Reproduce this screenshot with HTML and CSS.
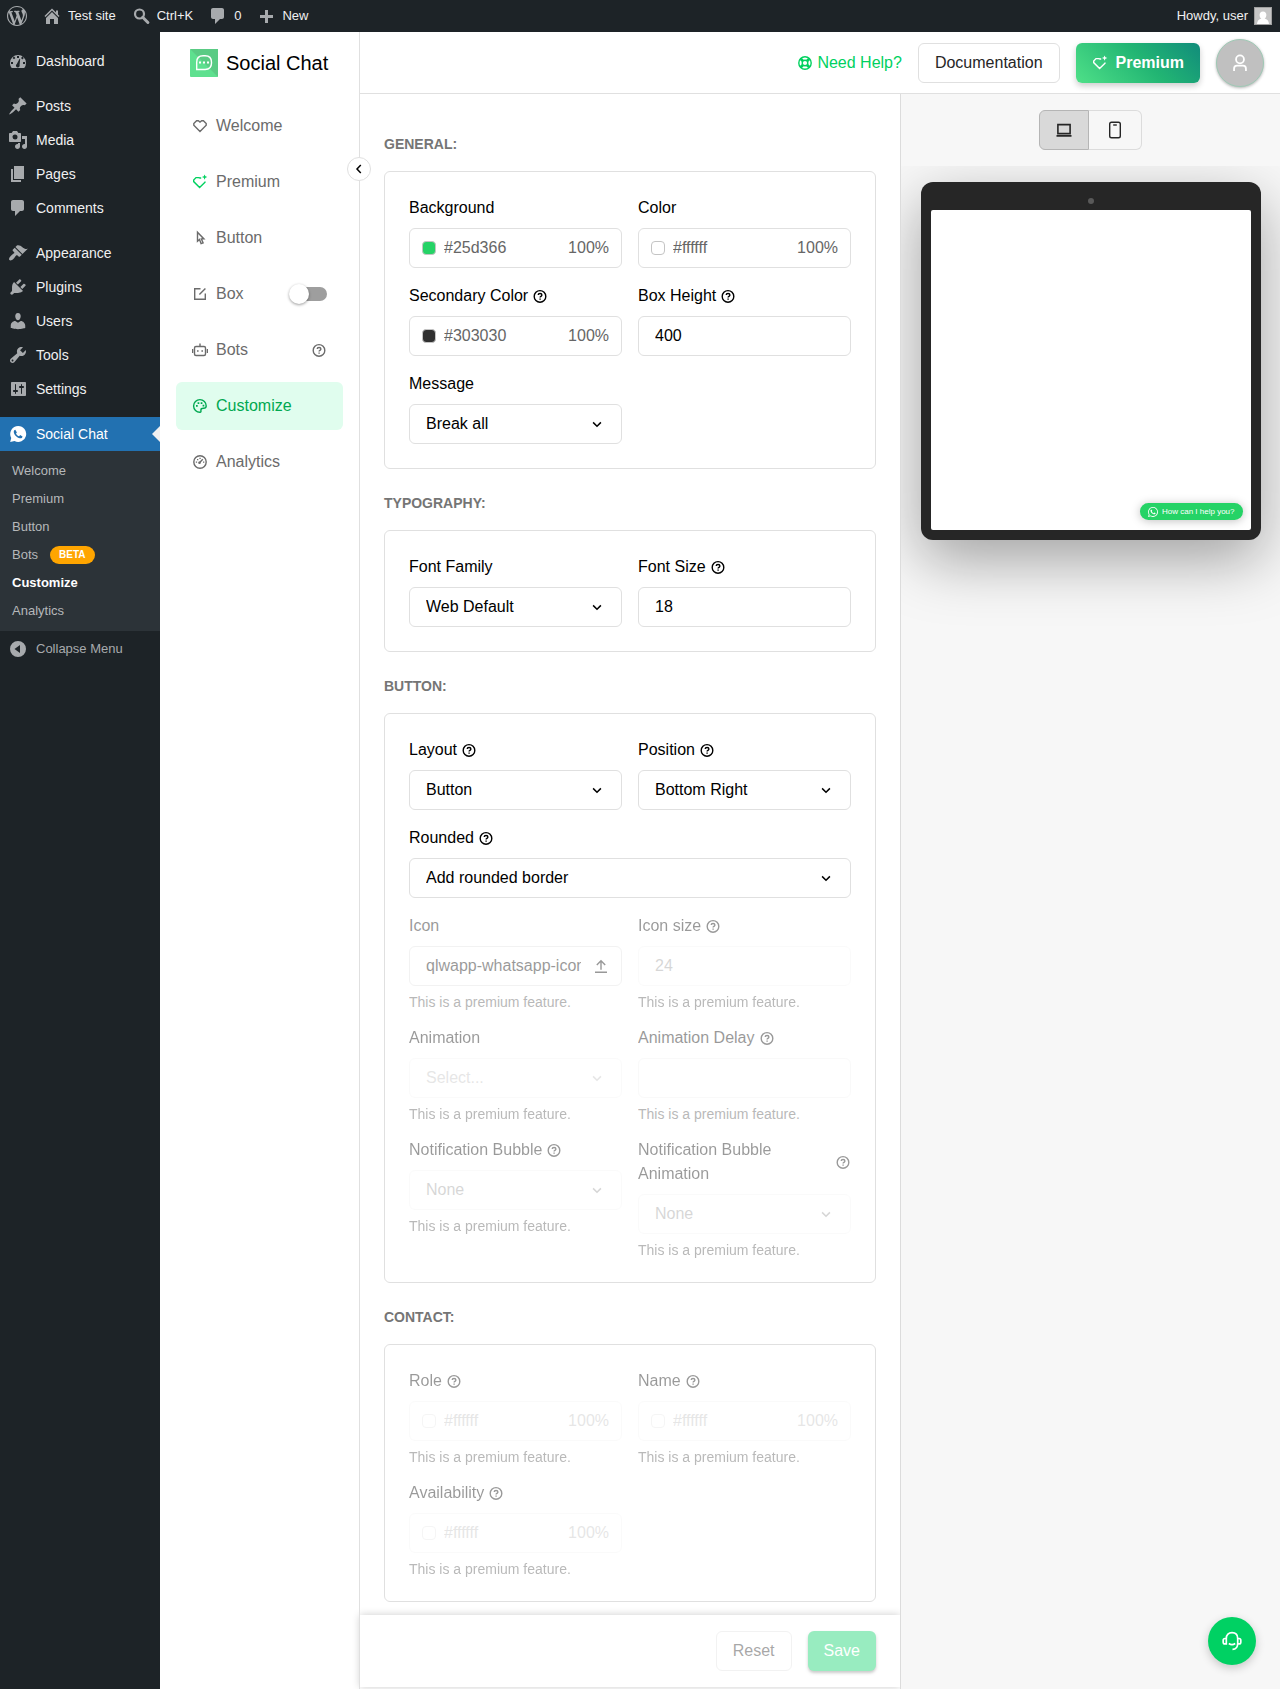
FILE: index.html
```html
<!DOCTYPE html>
<html lang="en">
<head>
    <meta charset="utf-8">
    <title>Customize - Social Chat</title>
    <link rel="stylesheet" href="styles.css">
</head>
<body>
    <!-- Icon sprite -->
    <svg class="sprite" xmlns="http://www.w3.org/2000/svg">
        <symbol id="i-wp" viewBox="0 0 20 20"><path d="M20 10c0-5.51-4.49-10-10-10C4.48 0 0 4.49 0 10c0 5.52 4.48 10 10 10 5.51 0 10-4.48 10-10zM7.78 15.37L4.37 6.22c.55-.02 1.17-.08 1.17-.08.5-.06.44-1.13-.06-1.11 0 0-1.45.11-2.37.11-.18 0-.37 0-.58-.01C4.12 2.69 6.87 1.11 10 1.11c2.33 0 4.45.87 6.05 2.34-.68-.11-1.65.39-1.65 1.58 0 .74.45 1.36.9 2.1.35.61.55 1.36.55 2.46 0 1.49-1.4 5-1.4 5l-3.03-8.37c.54-.02.82-.17.82-.17.5-.05.44-1.25-.06-1.22 0 0-1.44.12-2.38.12-.87 0-2.33-.12-2.33-.12-.5-.03-.56 1.2-.06 1.22l.92.08 1.26 3.41zM17.41 10c.24-.64.74-1.87.43-4.25.7 1.29 1.05 2.71 1.05 4.25 0 3.29-1.73 6.24-4.4 7.78.97-2.59 1.94-5.2 2.92-7.78zM6.1 18.09C3.12 16.65 1.11 13.53 1.11 10c0-1.3.23-2.48.72-3.59C3.25 10.3 4.67 14.2 6.1 18.09zm4.03-6.63l2.58 6.98c-.86.29-1.76.45-2.71.45-.79 0-1.57-.11-2.29-.33.81-2.38 1.62-4.74 2.42-7.1z"/></symbol>
        <symbol id="i-home" viewBox="0 0 20 20"><path d="M16 8.5l1.53 1.53-1.06 1.06L10 4.6l-6.47 6.49-1.06-1.06L10 2.5l4 4v-2h2v4zm-6-2.46l6 5.99V18h-4v-5H8v5H4v-5.97z"/></symbol>
        <symbol id="i-search" viewBox="0 0 20 20"><circle cx="8.5" cy="8" r="4.5" fill="none" stroke="currentColor" stroke-width="2.2"/><path d="M11.7 11.3l5.2 5.2" stroke="currentColor" stroke-width="3" stroke-linecap="round"/></symbol>
        <symbol id="i-comment" viewBox="0 0 20 20"><path d="M5 2h9c1.1 0 2 .9 2 2v7c0 1.1-.9 2-2 2h-2l-5 5v-5H5c-1.1 0-2-.9-2-2V4c0-1.1.9-2 2-2z"/></symbol>
        <symbol id="i-plus" viewBox="0 0 20 20"><path d="M17 9v3h-5v5H9v-5H4V9h5V4h3v5z"/></symbol>
        <symbol id="i-dashboard" viewBox="0 0 20 20"><path fill-rule="evenodd" d="M3.76 17h12.48A7.98 7.98 0 0 0 18 12a8 8 0 0 0-16 0c0 1.9.66 3.65 1.76 5zM9 5h2v2H9zM4.6 6.9l1.4-1.4 1.4 1.4L6 8.3zM13 7l1.4-1.4L15.8 7l-1.4 1.4zM3 11h2v2H3zM15 11h2v2h-2zM11.6 7.8l.6.2-.6 5.8a1.9 1.9 0 1 1-2.8-.9z"/></symbol>
        <symbol id="i-pin" viewBox="0 0 20 20"><path d="M10.44 3.02l1.82-1.82 6.36 6.35-1.83 1.82c-1.05-.68-2.48-.57-3.41.36l-.75.75c-.92.93-1.04 2.35-.35 3.41l-1.83 1.82-2.41-2.41-2.8 2.79c-.42.42-3.38 2.71-3.8 2.29s1.86-3.39 2.28-3.81l2.79-2.79L4.1 9.36l1.83-1.82c1.05.69 2.48.57 3.4-.36l.75-.75c.93-.92 1.05-2.35.36-3.41z"/></symbol>
        <symbol id="i-media" viewBox="0 0 20 20"><path d="M13 11V4c0-.55-.45-1-1-1h-1.67L9 1H5L3.67 3H2c-.55 0-1 .45-1 1v7c0 .55.45 1 1 1h10c.55 0 1-.45 1-1zM7 4.5a2.5 2.5 0 1 1 0 5 2.5 2.5 0 0 1 0-5zM14 6h5v10.5c0 1.38-1.12 2.5-2.5 2.5S14 17.88 14 16.5s1.12-2.5 2.5-2.5c.17 0 .34.02.5.05V9h-3V6zm-4 8.05V13h2v3.5c0 1.38-1.12 2.5-2.5 2.5S7 17.88 7 16.5 8.12 14 9.5 14c.17 0 .34.02.5.05z"/></symbol>
        <symbol id="i-page" viewBox="0 0 20 20"><path d="M6 15V2h10v13H6zm-1 1h8v2H3V5h2v11z"/></symbol>
        <symbol id="i-brush" viewBox="0 0 20 20"><path d="M14.48 11.06L7.41 3.99l1.5-1.5c.5-.56 2.3-.47 3.51.32 1.21.8 1.43 1.28 2.91 2.1 1.18.64 2.45 1.26 4.45.85zm-.71.71L6.7 4.7 4.93 6.47c-.39.39-.39 1.02 0 1.41l1.06 1.06c.39.39.39 1.03 0 1.42-.6.6-1.43 1.11-2.21 1.69-.35.26-.7.53-1.01.84C1.43 14.23.4 16.08 1.4 17.07c.99 1 2.84-.03 4.18-1.36.31-.31.58-.66.85-1.02.57-.78 1.08-1.61 1.69-2.21.39-.39 1.02-.39 1.41 0l1.06 1.06c.39.39 1.02.39 1.41 0z"/></symbol>
        <symbol id="i-plug" viewBox="0 0 20 20"><path d="M13.11 4.36L9.87 7.6 8 5.73l3.24-3.24c.35-.34 1.05-.2 1.56.32.52.51.66 1.21.31 1.55zm-8 1.77l.91-1.12 9.01 9.01-1.19.84c-.71.71-2.63 1.16-3.82 1.16H6.14L4.9 17.26c-.59.59-1.54.59-2.12 0-.59-.58-.59-1.53 0-2.12l1.24-1.24v-3.88c0-1.13.4-3.19 1.09-3.89zm7.26 3.97l3.24-3.24c.34-.35 1.04-.21 1.55.31.52.51.66 1.21.31 1.55l-3.24 3.25z"/></symbol>
        <symbol id="i-users" viewBox="0 0 20 20"><path d="M10 9.25c-2.27 0-2.73-3.44-2.73-3.44C7 4.02 7.82 2 9.97 2c2.16 0 2.98 2.02 2.71 3.81 0 0-.41 3.44-2.68 3.44zm0 2.57L12.72 10c2.39 0 4.52 2.33 4.52 4.53v2.49s-3.65 1.13-7.24 1.13c-3.65 0-7.24-1.13-7.24-1.13v-2.49c0-2.25 1.94-4.48 4.47-4.48z"/></symbol>
        <symbol id="i-tools" viewBox="0 0 20 20"><path d="M16.68 9.77c-1.34 1.34-3.3 1.67-4.95.99l-5.41 6.52c-.99.99-2.59.99-3.58 0s-.99-2.59 0-3.57l6.52-5.42c-.68-1.65-.35-3.61.99-4.95 1.28-1.28 3.12-1.62 4.72-1.06l-2.89 2.89 2.82 2.82 2.86-2.87c.53 1.58.18 3.39-1.08 4.65zM3.81 16.21c.4.39 1.04.39 1.43 0 .4-.4.4-1.04 0-1.43-.39-.4-1.03-.4-1.43 0-.39.39-.39 1.03 0 1.43z"/></symbol>
        <symbol id="i-settings" viewBox="0 0 20 20"><path d="M18 16V4c0-.55-.45-1-1-1H4c-.55 0-1 .45-1 1v12c0 .55.45 1 1 1h13c.55 0 1-.45 1-1zM8 11h1c.55 0 1 .45 1 1s-.45 1-1 1H8v1.5c0 .28-.22.5-.5.5s-.5-.22-.5-.5V13H6c-.55 0-1-.45-1-1s.45-1 1-1h1V5.5c0-.28.22-.5.5-.5s.5.22.5.5V11zm5-2h-1c-.55 0-1-.45-1-1s.45-1 1-1h1V5.5c0-.28.22-.5.5-.5s.5.22.5.5V7h1c.55 0 1 .45 1 1s-.45 1-1 1h-1v5.5c0 .28-.22.5-.5.5s-.5-.22-.5-.5V9z"/></symbol>
        <symbol id="i-wa-solid" viewBox="0 0 20 20"><path fill-rule="evenodd" d="M10.2 2a8 8 0 1 1-3.7 15.1L2.2 18l1-4.1A8 8 0 0 1 10.2 2zM7.3 5.7c-.8 0-1.7 1-1.5 2.6.4 2.6 3.1 5.5 6 6 1.5.2 2.6-.6 2.7-1.9l-2.3-1.3-1.1 1.2c-1.4-.5-2.5-1.6-3.1-2.9l.9-1z"/></symbol>
        <symbol id="i-collapse" viewBox="0 0 20 20"><path fill-rule="evenodd" d="M10 2a8 8 0 1 1 0 16 8 8 0 0 1 0-16zm2 4l-5.5 4 5.5 4z"/></symbol>
        <symbol id="i-whatsapp" viewBox="0 0 24 24"><path d="M17.472 14.382c-.297-.149-1.758-.867-2.03-.967-.273-.099-.471-.148-.67.15-.197.297-.767.966-.94 1.164-.173.199-.347.223-.644.075-.297-.15-1.255-.463-2.39-1.475-.883-.788-1.48-1.761-1.653-2.059-.173-.297-.018-.458.13-.606.134-.133.298-.347.446-.52.149-.174.198-.298.298-.497.099-.198.05-.371-.025-.52-.075-.149-.669-1.612-.916-2.207-.242-.579-.487-.5-.669-.51-.173-.008-.371-.01-.57-.01-.198 0-.52.074-.792.372-.272.297-1.04 1.016-1.04 2.479 0 1.462 1.065 2.875 1.213 3.074.149.198 2.096 3.2 5.077 4.487.709.306 1.262.489 1.694.625.712.227 1.36.195 1.871.118.571-.085 1.758-.719 2.006-1.413.248-.694.248-1.289.173-1.413-.074-.124-.272-.198-.57-.347m-5.421 7.403h-.004a9.87 9.87 0 01-5.031-1.378l-.361-.214-3.741.982.998-3.648-.235-.374a9.86 9.86 0 01-1.51-5.26c.001-5.45 4.436-9.884 9.888-9.884 2.64 0 5.122 1.03 6.988 2.898a9.825 9.825 0 012.893 6.994c-.003 5.45-4.437 9.884-9.885 9.884m8.413-18.297A11.815 11.815 0 0012.05 0C5.495 0 .16 5.335.157 11.892c0 2.096.547 4.142 1.588 5.945L.057 24l6.305-1.654a11.882 11.882 0 005.683 1.448h.005c6.554 0 11.89-5.335 11.893-11.893a11.821 11.821 0 00-3.48-8.413z"/></symbol>

        <symbol id="i-heart" viewBox="0 0 16 16"><path class="line" d="M4.6 2.7h1.7L8 4l1.7-1.3h1.7l2.8 2.9v1.7L8 13.4 1.8 7.3V5.6z"/></symbol>
        <symbol id="i-gem" viewBox="0 0 16 16"><path class="line" d="M9.2 4H8L6.6 3.6H4L1.7 6v1.6l5.9 5.9L13 8.2v-.8"/><path d="M12.6.4l.8 1.8 1.9.8-1.9.8-.8 1.9-.8-1.9-1.9-.8 1.9-.8z"/></symbol>
        <symbol id="i-pointer" viewBox="0 0 16 16"><path class="line" d="M5.5 2.2v9l2-1.7 1.6 4.2 2-.8-1.7-4h2.5z"/></symbol>
        <symbol id="i-box" viewBox="0 0 16 16"><path class="line" d="M8.5 2.7H2.7v10.6h10.6V7.5M7.4 8.6l6-6.1"/></symbol>
        <symbol id="i-bot" viewBox="0 0 16 16"><rect class="line" x="2.5" y="4.5" width="11" height="9" rx="1.5"/><path class="line" d="M8 4.5v-3M.6 7v4M15.4 7v4"/><path d="M5 8.2h1.6v1.6H5zM9.4 8.2H11v1.6H9.4z"/></symbol>
        <symbol id="i-palette" viewBox="0 0 16 16"><path class="line" d="M8 14.2A6.3 6.3 0 1 1 14.2 8c0 1.7-1.2 2.3-2.7 2.3-2 0-2.6.4-2.6 1.6 0 1.1.5 2.3-.9 2.3z"/><path d="M4 7h1.7v1.7H4zM5.6 4.2h1.7v1.7H5.6zM8.7 4.2h1.7v1.7H8.7zM10.6 6.8h1.7v1.7h-1.7z"/></symbol>
        <symbol id="i-gauge" viewBox="0 0 16 16"><circle class="line" cx="8" cy="8" r="6.2"/><path class="line" d="M7.4 8.8l3.4-3.6"/><path d="M3.8 7.5h1.3v1.3H3.8zM5 4.9h1.3v1.3H5zM7.4 3.7h1.3V5H7.4zM11 7.5h1.3v1.3H11z"/><circle cx="7.5" cy="8.7" r="1.3"/></symbol>
        <symbol id="i-help" viewBox="0 0 16 16"><circle class="line" cx="8" cy="8.4" r="5.8"/><path class="line" d="M6.2 7.1c0-2.2 3.7-2.2 3.7 0 0 1.3-1.8 1.2-1.8 2.5"/><path d="M7.4 10.4h1.4v1.4H7.4z"/></symbol>
        <symbol id="i-down" viewBox="0 0 16 16"><path fill="none" stroke="currentColor" stroke-width="1.5" d="M4.1 6.4L8 10.2l3.9-3.8"/></symbol>
        <symbol id="i-left" viewBox="0 0 16 16"><path fill="none" stroke="currentColor" stroke-width="1.5" d="M9.8 4L6 8l3.8 4"/></symbol>
        <symbol id="i-upload" viewBox="0 0 16 16"><path class="line" d="M2 14.2h12M8 11.8V3M3.8 6.9L8 2.7l4.2 4.2"/></symbol>
        <symbol id="i-lifebuoy" viewBox="0 0 16 16"><circle class="line" cx="8" cy="8" r="6.2"/><circle class="line" cx="8" cy="8" r="2.8"/><path fill="none" stroke="currentColor" stroke-width="2.8" d="M3.7 3.7l2.2 2.2M12.3 3.7l-2.2 2.2M3.7 12.3l2.2-2.2M12.3 12.3l-2.2-2.2"/></symbol>
        <symbol id="i-user" viewBox="0 0 20 20"><circle cx="10" cy="6" r="4.4" fill="none" stroke="currentColor" stroke-width="2"/><path fill="none" stroke="currentColor" stroke-width="2" d="M3.4 18.8v-2.5c0-2 1.3-3.3 3.3-3.3h6.6c2 0 3.3 1.3 3.3 3.3v2.5"/></symbol>
        <symbol id="i-laptop" viewBox="0 0 16 16"><path fill="none" stroke="currentColor" stroke-width="1.6" d="M1.9 2.6h12.2v9H1.9zM.5 13.9h15"/></symbol>
        <symbol id="i-phone" viewBox="0 0 20 20"><rect x="4.7" y="2.2" width="10.6" height="15.6" rx="1.8" fill="none" stroke="currentColor" stroke-width="1.4"/><path d="M8.2 4.3h3.6v1.4H8.2z"/></symbol>
        <symbol id="i-headset" viewBox="0 0 20 20"><path fill="none" stroke="currentColor" stroke-width="1.7" d="M4.3 7.5C4.3 3.8 6.7 1.7 10 1.7s5.7 2.1 5.7 5.8v4.7c0 4-2 6.1-5.2 6.1M4.3 7.5v5.4H3c-1.2 0-1.8-.6-1.8-1.7V9.3c0-1.2.6-1.8 1.8-1.8zM15.7 7.5H17c1.2 0 1.8.6 1.8 1.8v1.9c0 1.1-.6 1.7-1.8 1.7h-1.3M6.8 12.5c1.8 1.2 4.6 1.2 6.4 0"/></symbol>
    </svg>

    <!-- Admin bar -->
    <header class="adminbar">
        <a href="#" aria-label="About WordPress"><svg><use href="#i-wp"/></svg></a>
        <a href="#"><svg><use href="#i-home"/></svg>Test site</a>
        <a href="#"><svg><use href="#i-search"/></svg>Ctrl+K</a>
        <a href="#"><svg><use href="#i-comment"/></svg>0</a>
        <a href="#"><svg><use href="#i-plus"/></svg>New</a>
        <a href="#" class="howdy">Howdy, user
            <svg class="howdy-pic" viewBox="0 0 18 18"><rect width="18" height="18" fill="#a0a0a0"/><rect x="1" y="1" width="16" height="16" fill="#c6c6c6"/><path fill="#fff" d="M9 4.5c4.5 0 4 6 1.6 7 2.6.6 4.2 2.5 4.4 5.5H3c.2-3 1.8-4.9 4.4-5.5C5 10.500 4.500 4.500 9 4.500z"/></svg>
        </a>
    </header>

    <div class="layout">
        <!-- WordPress menu -->
        <nav class="wp-menu">
            <a href="#"><svg><use href="#i-dashboard"/></svg>Dashboard</a>
            <div class="wp-separator"></div>
            <a href="#"><svg><use href="#i-pin"/></svg>Posts</a>
            <a href="#"><svg><use href="#i-media"/></svg>Media</a>
            <a href="#"><svg><use href="#i-page"/></svg>Pages</a>
            <a href="#"><svg><use href="#i-comment"/></svg>Comments</a>
            <div class="wp-separator"></div>
            <a href="#"><svg><use href="#i-brush"/></svg>Appearance</a>
            <a href="#"><svg><use href="#i-plug"/></svg>Plugins</a>
            <a href="#"><svg><use href="#i-users"/></svg>Users</a>
            <a href="#"><svg><use href="#i-tools"/></svg>Tools</a>
            <a href="#"><svg><use href="#i-settings"/></svg>Settings</a>
            <div class="wp-separator"></div>
            <a href="#" class="current"><svg><use href="#i-wa-solid"/></svg>Social Chat</a>
            <div class="wp-submenu">
                <a href="#">Welcome</a>
                <a href="#">Premium</a>
                <a href="#">Button</a>
                <a href="#">Bots <span class="beta">BETA</span></a>
                <a href="#" class="active">Customize</a>
                <a href="#">Analytics</a>
            </div>
            <button type="button" class="wp-collapse"><svg><use href="#i-collapse"/></svg>Collapse Menu</button>
        </nav>

        <!-- Plugin sidebar -->
        <aside class="sidebar">
            <div class="brand">
                <svg viewBox="0 0 28 28"><rect width="28" height="28" rx="1" fill="#5ee08f"/><path d="M0 0h28v28z" fill="#5acb84"/><path fill="none" stroke="#fff" stroke-width="1.4" d="M6.7 20.5v-7.3c0-4 2.5-6.4 6.4-6.4h2c4 0 6.4 2.5 6.4 6.4v.9c0 4-2.5 6.4-6.4 6.4z"/><path fill="#fff" d="M9 12.5h2v2H9zM13 12.5h2v2h-2zM17 12.5h2v2h-2z"/></svg>
                Social Chat
            </div>
            <ul class="sidebar-nav">
                <li><a href="#"><svg><use href="#i-heart"/></svg>Welcome</a></li>
                <li><a href="#"><svg class="green"><use href="#i-gem"/></svg>Premium</a></li>
                <li><a href="#"><svg><use href="#i-pointer"/></svg>Button</a></li>
                <li><a href="#"><svg><use href="#i-box"/></svg>Box</a><input type="checkbox" class="switch" aria-label="Enable box"></li>
                <li><a href="#"><svg><use href="#i-bot"/></svg>Bots</a><svg class="help"><use href="#i-help"/></svg></li>
                <li class="active"><a href="#"><svg><use href="#i-palette"/></svg>Customize</a></li>
                <li><a href="#"><svg><use href="#i-gauge"/></svg>Analytics</a></li>
            </ul>
            <button type="button" class="sidebar-toggle" aria-label="Collapse sidebar"><svg><use href="#i-left"/></svg></button>
        </aside>

        <div class="content">
            <header class="topbar">
                <a href="#" class="need-help"><svg><use href="#i-lifebuoy"/></svg>Need Help?</a>
                <a href="#" class="btn">Documentation</a>
                <a href="#" class="btn btn-premium"><svg><use href="#i-gem"/></svg>Premium</a>
                <button type="button" class="avatar" aria-label="Account"><svg><use href="#i-user"/></svg></button>
            </header>

            <div class="columns">
                <form class="settings">
                    <div class="sections">
                        <h2>General:</h2>
                        <section class="card">
                            <div class="field">
                                <label for="background">Background</label>
                                <div class="color"><button type="button" class="swatch swatch-brand" aria-label="Pick background"></button><input id="background" type="text" value="#25d366"><input type="text" class="alpha" value="100%" aria-label="Background opacity"></div>
                            </div>
                            <div class="field">
                                <label for="color">Color</label>
                                <div class="color"><button type="button" class="swatch" aria-label="Pick color"></button><input id="color" type="text" value="#ffffff"><input type="text" class="alpha" value="100%" aria-label="Color opacity"></div>
                            </div>
                            <div class="field">
                                <label for="secondary">Secondary Color<svg><use href="#i-help"/></svg></label>
                                <div class="color"><button type="button" class="swatch swatch-dark" aria-label="Pick secondary color"></button><input id="secondary" type="text" value="#303030"><input type="text" class="alpha" value="100%" aria-label="Secondary color opacity"></div>
                            </div>
                            <div class="field">
                                <label for="box-height">Box Height<svg><use href="#i-help"/></svg></label>
                                <input id="box-height" class="control" type="text" value="400">
                            </div>
                            <div class="field">
                                <label for="message">Message</label>
                                <div class="select"><select id="message" class="control"><option>Break all</option></select><svg><use href="#i-down"/></svg></div>
                            </div>
                        </section>

                        <h2>Typography:</h2>
                        <section class="card">
                            <div class="field">
                                <label for="font-family">Font Family</label>
                                <div class="select"><select id="font-family" class="control"><option>Web Default</option></select><svg><use href="#i-down"/></svg></div>
                            </div>
                            <div class="field">
                                <label for="font-size">Font Size<svg><use href="#i-help"/></svg></label>
                                <input id="font-size" class="control" type="text" value="18">
                            </div>
                        </section>

                        <h2>Button:</h2>
                        <section class="card">
                            <div class="field">
                                <label for="btn-layout">Layout<svg><use href="#i-help"/></svg></label>
                                <div class="select"><select id="btn-layout" class="control"><option>Button</option></select><svg><use href="#i-down"/></svg></div>
                            </div>
                            <div class="field">
                                <label for="position">Position<svg><use href="#i-help"/></svg></label>
                                <div class="select"><select id="position" class="control"><option>Bottom Right</option></select><svg><use href="#i-down"/></svg></div>
                            </div>
                            <div class="field field-wide">
                                <label for="rounded">Rounded<svg><use href="#i-help"/></svg></label>
                                <div class="select"><select id="rounded" class="control"><option>Add rounded border</option></select><svg><use href="#i-down"/></svg></div>
                            </div>
                            <div class="field premium">
                                <label for="icon">Icon</label>
                                <div class="upload"><input id="icon" type="text" value="qlwapp-whatsapp-icon" readonly><button type="button" aria-label="Upload icon"><svg><use href="#i-upload"/></svg></button></div>
                                <p>This is a premium feature.</p>
                            </div>
                            <div class="field premium">
                                <label for="icon-size">Icon size<svg><use href="#i-help"/></svg></label>
                                <input id="icon-size" class="control" type="text" value="24" disabled>
                                <p>This is a premium feature.</p>
                            </div>
                            <div class="field premium">
                                <label for="animation">Animation</label>
                                <div class="select disabled placeholder"><select id="animation" class="control" disabled><option>Select...</option></select><svg><use href="#i-down"/></svg></div>
                                <p>This is a premium feature.</p>
                            </div>
                            <div class="field premium">
                                <label for="delay">Animation Delay<svg><use href="#i-help"/></svg></label>
                                <input id="delay" class="control" type="text" disabled>
                                <p>This is a premium feature.</p>
                            </div>
                            <div class="field premium">
                                <label for="bubble">Notification Bubble<svg><use href="#i-help"/></svg></label>
                                <div class="select disabled"><select id="bubble" class="control" disabled><option>None</option></select><svg><use href="#i-down"/></svg></div>
                                <p>This is a premium feature.</p>
                            </div>
                            <div class="field premium">
                                <label for="bubble-animation">Notification Bubble Animation<svg><use href="#i-help"/></svg></label>
                                <div class="select disabled"><select id="bubble-animation" class="control" disabled><option>None</option></select><svg><use href="#i-down"/></svg></div>
                                <p>This is a premium feature.</p>
                            </div>
                        </section>

                        <h2>Contact:</h2>
                        <section class="card">
                            <div class="field premium">
                                <label for="role">Role<svg><use href="#i-help"/></svg></label>
                                <div class="color disabled"><button type="button" class="swatch" aria-label="Pick role color" disabled></button><input id="role" type="text" value="#ffffff" disabled><input type="text" class="alpha" value="100%" aria-label="Role opacity" disabled></div>
                                <p>This is a premium feature.</p>
                            </div>
                            <div class="field premium">
                                <label for="name">Name<svg><use href="#i-help"/></svg></label>
                                <div class="color disabled"><button type="button" class="swatch" aria-label="Pick name color" disabled></button><input id="name" type="text" value="#ffffff" disabled><input type="text" class="alpha" value="100%" aria-label="Name opacity" disabled></div>
                                <p>This is a premium feature.</p>
                            </div>
                            <div class="field premium">
                                <label for="availability">Availability<svg><use href="#i-help"/></svg></label>
                                <div class="color disabled"><button type="button" class="swatch" aria-label="Pick availability color" disabled></button><input id="availability" type="text" value="#ffffff" disabled><input type="text" class="alpha" value="100%" aria-label="Availability opacity" disabled></div>
                                <p>This is a premium feature.</p>
                            </div>
                        </section>
                    </div>
                    <footer class="actions">
                        <button type="reset" class="btn" disabled>Reset</button>
                        <button type="submit" class="btn btn-save" disabled>Save</button>
                    </footer>
                </form>

                <!-- Live preview -->
                <aside class="preview">
                    <div class="devices">
                        <button type="button" class="selected" aria-label="Desktop"><svg><use href="#i-laptop"/></svg></button>
                        <button type="button" aria-label="Mobile"><svg class="phone"><use href="#i-phone"/></svg></button>
                    </div>
                    <div class="stage">
                        <div class="tablet">
                            <div class="camera"></div>
                            <div class="screen">
                                <a href="#" class="widget"><svg><use href="#i-whatsapp"/></svg>How can I help you?</a>
                            </div>
                        </div>
                    </div>
                </aside>
            </div>
        </div>
    </div>

    <button type="button" class="support" aria-label="Support"><svg><use href="#i-headset"/></svg></button>
</body>
</html>
```
FILE: styles.css
```css
* {
    box-sizing: border-box;
}
body {
    margin: 0;
    min-height: 100vh;
    display: flex;
    flex-direction: column;
    font-family: "Liberation Sans", Arial, sans-serif;
    font-size: 16px;
    line-height: 24px;
    color: #000;
    background: #fff;
}
a {
    color: inherit;
    text-decoration: none;
}
button, input, select {
    font: inherit;
    color: inherit;
}
button {
    cursor: pointer;
}
svg {
    width: 16px;
    height: 16px;
    fill: currentColor;
    flex-shrink: 0;
}
.sprite {
    position: absolute;
    width: 0;
    height: 0;
}
.line {
    fill: none;
    stroke: currentColor;
    stroke-width: 1.4;
}

/* Admin bar */
.adminbar {
    display: flex;
    height: 32px;
    background: #1d2327;
    color: #f0f0f1;
    font-size: 13px;
}
.adminbar a {
    display: flex;
    align-items: center;
    gap: 6px;
    padding: 0 8px 0 7px;
}
.adminbar svg {
    width: 20px;
    height: 20px;
    color: #a7aaad;
}
.adminbar .howdy {
    margin-left: auto;
}
.adminbar .howdy-pic {
    width: 18px;
    height: 18px;
}

.layout {
    flex: 1;
    display: flex;
}

/* WordPress menu */
.wp-menu {
    width: 160px;
    flex-shrink: 0;
    padding-top: 12px;
    background: #1d2327;
    color: #f0f0f1;
    font-size: 14px;
}
.wp-menu > a, .wp-collapse {
    position: relative;
    display: flex;
    align-items: center;
    gap: 8px;
    width: 100%;
    height: 34px;
    padding: 0 8px;
}
.wp-menu svg {
    width: 20px;
    height: 20px;
    color: #a7aaad;
}
.wp-separator {
    height: 11px;
}
.wp-menu .current {
    background: #2271b1;
    color: #fff;
}
.wp-menu .current svg {
    color: #fff;
}
.wp-menu .current::after {
    content: "";
    position: absolute;
    right: 0;
    top: 9px;
    border: 8px solid transparent;
    border-left-width: 0;
    border-right-color: #f0f0f1;
}
.wp-submenu {
    padding: 6px 0;
    background: #2c3338;
    color: #b5b8ba;
    font-size: 13px;
}
.wp-submenu a {
    display: flex;
    align-items: center;
    gap: 12px;
    height: 28px;
    padding: 0 12px;
}
.wp-submenu .active {
    color: #fff;
    font-weight: bold;
}
.beta {
    padding: 0 9px;
    border-radius: 9px;
    background: #ffa500;
    color: #fff;
    font-size: 10px;
    font-weight: bold;
    line-height: 18px;
}
.wp-collapse {
    margin-top: 1px;
    border: 0;
    background: none;
    color: #a7aaad;
    font-size: 13px;
}

/* Plugin sidebar */
.sidebar {
    position: relative;
    width: 200px;
    flex-shrink: 0;
    border-right: 1px solid #e0e0e0;
}
.brand {
    display: flex;
    align-items: center;
    gap: 8px;
    height: 62px;
    padding-left: 30px;
    font-size: 20px;
}
.brand svg {
    width: 28px;
    height: 28px;
}
.sidebar-nav {
    display: flex;
    flex-direction: column;
    gap: 8px;
    margin: 0;
    padding: 8px 16px;
    list-style: none;
    color: #6b6b6b;
}
.sidebar-nav li {
    display: flex;
    align-items: center;
    height: 48px;
    padding: 0 16px;
    border-radius: 6px;
}
.sidebar-nav a {
    flex: 1;
    display: flex;
    align-items: center;
    gap: 8px;
}
.sidebar-nav .active {
    background: #e0fdee;
    color: #00a850;
}
.green {
    color: #00d15f;
}
.switch {
    appearance: none;
    position: relative;
    width: 34px;
    height: 14px;
    margin: 0;
    border-radius: 7px;
    background: #9e9e9e;
}
.switch::before {
    content: "";
    position: absolute;
    left: -4px;
    top: -3px;
    width: 20px;
    height: 20px;
    border-radius: 50%;
    background: #fff;
    box-shadow: 0 1px 3px rgba(0, 0, 0, 0.4);
}
.sidebar-toggle {
    position: absolute;
    top: 125px;
    right: -12px;
    z-index: 2;
    display: grid;
    place-items: center;
    width: 24px;
    height: 24px;
    padding: 0;
    border: 1px solid #e0e0e0;
    border-radius: 50%;
    background: #fff;
}

/* Top bar */
.content {
    flex: 1;
    min-width: 0;
    display: flex;
    flex-direction: column;
}
.topbar {
    display: flex;
    align-items: center;
    justify-content: flex-end;
    gap: 16px;
    height: 62px;
    padding: 0 16px;
    border-bottom: 1px solid #e0e0e0;
}
.need-help {
    display: flex;
    align-items: center;
    gap: 4px;
    color: #00d15f;
}
.btn {
    display: flex;
    align-items: center;
    gap: 8px;
    height: 40px;
    padding: 0 16px;
    border: 1px solid #e0e0e0;
    border-radius: 6px;
    background: #fff;
    color: #262626;
}
.btn-premium {
    border: 0;
    background: linear-gradient(45deg, #4fe088, #22b573 55%, #118c7b);
    color: #fff;
    font-weight: bold;
    box-shadow: 0 3px 6px rgba(0, 0, 0, 0.2);
}
.avatar {
    display: grid;
    place-items: center;
    width: 48px;
    height: 48px;
    padding: 0;
    border: 1px solid #9fc9b5;
    border-radius: 50%;
    background: #c0c0c0;
    color: #fff;
    box-shadow: 0 1px 3px rgba(0, 0, 0, 0.3);
}
.avatar svg {
    width: 18px;
    height: 18px;
}

/* Settings form */
.columns {
    flex: 1;
    display: grid;
    grid-template-columns: 1fr 380px;
}
.settings {
    display: flex;
    flex-direction: column;
    min-width: 0;
}
.sections {
    padding: 16px 24px 12px;
}
h2 {
    margin: 24px 0 16px;
    font-size: 14px;
    line-height: 21px;
    text-transform: uppercase;
    color: #757575;
}
.card {
    display: grid;
    grid-template-columns: 1fr 1fr;
    align-items: start;
    gap: 16px;
    padding: 24px;
    border: 1px solid #e0e0e0;
    border-radius: 6px;
}
.field {
    display: flex;
    flex-direction: column;
    gap: 8px;
    min-width: 0;
}
.field-wide {
    grid-column: span 2;
}
.field label {
    display: flex;
    align-items: center;
    gap: 4px;
}
.field p {
    margin: 0;
    font-size: 14px;
    line-height: 16px;
    color: #505050;
}
.control, .color, .upload {
    width: 100%;
    height: 40px;
    border: 1px solid #e0e0e0;
    border-radius: 6px;
    background: #fff;
}
.control {
    padding: 0 16px;
    appearance: none;
}
.select {
    position: relative;
}
.select select {
    display: block;
}
.select svg {
    position: absolute;
    top: 12px;
    right: 17px;
    pointer-events: none;
}
.color, .upload {
    display: flex;
    align-items: center;
}
.color {
    gap: 8px;
    padding: 0 12px;
    color: #666;
}
.color input, .upload input {
    flex: 1;
    width: 0;
    padding: 0;
    border: 0;
    background: none;
}
.color .alpha {
    text-align: right;
}
.swatch {
    width: 14px;
    height: 14px;
    padding: 0;
    border: 1px solid #c4c4c4;
    border-radius: 4px;
    background: #fff;
}
.swatch-brand {
    background: #25d366;
}
.swatch-dark {
    background: #303030;
}
.upload {
    padding-left: 16px;
}
.upload button {
    display: grid;
    place-items: center;
    width: 40px;
    height: 38px;
    padding: 0;
    border: 0;
    background: none;
}
.premium {
    opacity: 0.4;
}
.premium .disabled, .premium .control:disabled {
    opacity: 0.4;
}
.premium .disabled .control {
    opacity: 1;
}
.placeholder {
    color: #666;
}
.actions {
    display: flex;
    justify-content: flex-end;
    gap: 16px;
    margin: auto 0 2px;
    padding: 16px 24px;
    background: #fff;
    box-shadow: 0 0 8px rgba(0, 0, 0, 0.2);
}
.actions .btn {
    opacity: 0.4;
}
.actions .btn-save {
    border: 0;
    background: #00d163;
    color: #fff;
    box-shadow: 0 2px 3px rgba(0, 0, 0, 0.5);
}

/* Preview */
.preview {
    position: relative;
    border-left: 1px solid #dcdcdc;
    background: #f7f7f7;
}
.devices {
    display: flex;
    justify-content: center;
    padding: 16px;
}
.devices button {
    display: grid;
    place-items: center;
    height: 40px;
    padding: 0 16px;
    border: 1px solid #dcdcdc;
    border-left: 0;
    border-radius: 0 6px 6px 0;
    background: #f7f7f7;
    color: #262626;
}
.devices .selected {
    border: 1px solid #b5b5b5;
    border-radius: 6px 0 0 6px;
    background: #d9d9d9;
}
.devices .phone {
    width: 20px;
    height: 20px;
}
.stage {
    overflow: hidden;
    padding: 16px 0 96px;
}
.tablet {
    width: 340px;
    margin: 0 auto;
    padding: 0 10px 10px;
    border-radius: 12px;
    background: #262626;
    box-shadow: 0 20px 60px rgba(0, 0, 0, 0.35);
}
.camera {
    display: grid;
    place-items: center;
    height: 28px;
    padding-top: 10px;
}
.camera::before {
    content: "";
    width: 6px;
    height: 6px;
    border-radius: 50%;
    background: #595959;
}
.screen {
    display: flex;
    align-items: flex-end;
    justify-content: flex-end;
    aspect-ratio: 1;
    padding: 10px 8px;
    border-radius: 2px;
    background: #fff;
}
.widget {
    display: flex;
    align-items: center;
    gap: 4px;
    height: 17px;
    padding: 0 8px;
    border-radius: 9px;
    background: #25d366;
    color: #fff;
    font-size: 8px;
    box-shadow: 0 1px 10px rgba(0, 0, 0, 0.25);
}
.widget svg {
    width: 10px;
    height: 10px;
}
.support {
    position: fixed;
    right: 24px;
    bottom: 24px;
    display: grid;
    place-items: center;
    width: 48px;
    height: 48px;
    padding: 0;
    border: 0;
    border-radius: 50%;
    background: #00d163;
    color: #fff;
    box-shadow: 0 3px 10px rgba(0, 0, 0, 0.2);
}
.support svg {
    width: 20px;
    height: 20px;
}
```
